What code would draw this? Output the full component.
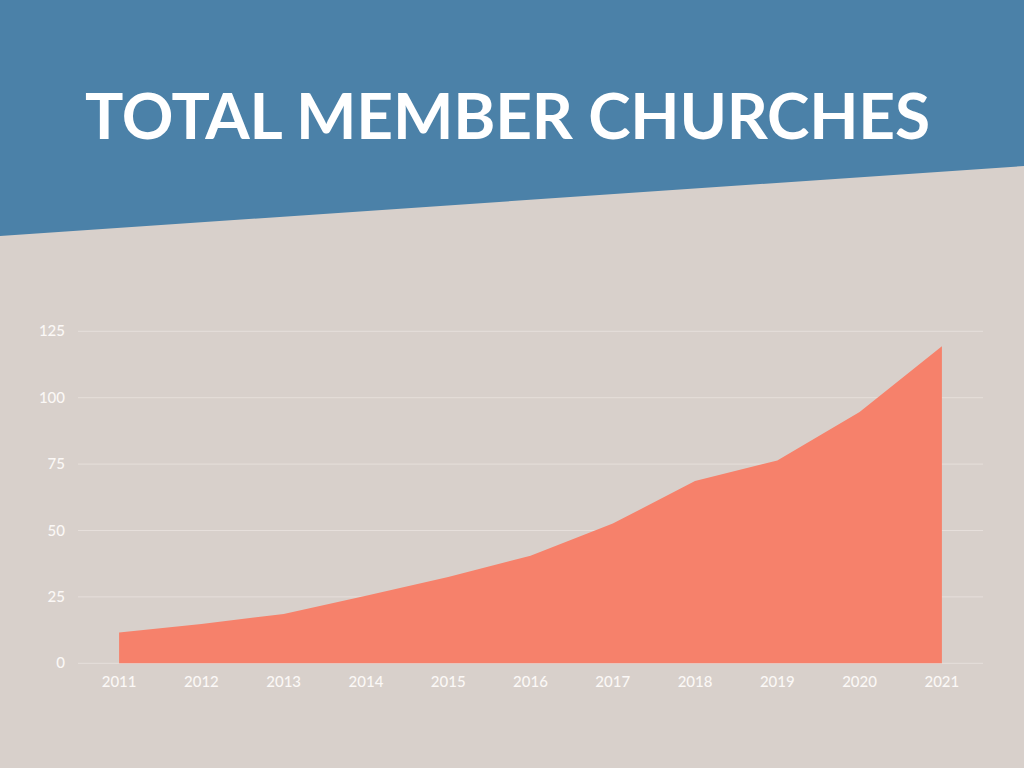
const years = ["2011", "2012", "2013", "2014", "2015", "2016", "2017", "2018", "2019", "2020", "2021"];
const values = [11.6, 14.8, 18.6, 25.4, 32.5, 40.5, 52.6, 68.6, 76.4, 94.6, 119.4];
const ticks = [0, 25, 50, 75, 100, 125];

// chart geometry in page pixels
const left = 78;
const right = 983;
const zeroY = 663.3;
const perUnit = 2.656;
const band = (right - left) / years.length;

const xAt = (i: number) => left + band / 2 + i * band;
const yAt = (v: number) => zeroY - v * perUnit;

function AreaChart() {
  const points = values.map((v, i) => `${xAt(i).toFixed(1)},${yAt(v).toFixed(1)}`);
  const area = [
    `${xAt(0).toFixed(1)},${zeroY}`,
    ...points,
    `${xAt(values.length - 1).toFixed(1)},${zeroY}`,
  ].join(" ");

  return (
    <svg
      width={1024}
      height={400}
      viewBox="0 300 1024 400"
      className="block font-['Lato','Liberation_Sans',sans-serif]"
    >
      {ticks.map((t) => (
        <line
          key={t}
          x1={left}
          x2={right}
          y1={yAt(t)}
          y2={yAt(t)}
          stroke="#e6dfdb"
          strokeWidth={1}
        />
      ))}
      <polygon points={area} fill="#f6816b" />
      {ticks.map((t) => (
        <text
          key={t}
          x={65}
          y={yAt(t) + 5}
          textAnchor="end"
          fontSize={15}
          fontWeight={500}
          fill="#fbf8f6"
        >
          {t}
        </text>
      ))}
      {years.map((y, i) => (
        <text
          key={y}
          x={xAt(i)}
          y={687}
          textAnchor="middle"
          fontSize={15}
          fontWeight={500}
          fill="#fbf8f6"
        >
          {y}
        </text>
      ))}
    </svg>
  );
}

export default function App() {
  return (
    <div className="relative h-[768px] w-[1024px] overflow-hidden bg-[#d8d0cb]">
      <header className="h-[236px] bg-[#4b81a8] [clip-path:polygon(0_0,100%_0,100%_166px,0_236px)]">
        <h1 className="pl-[85px] pt-[83px] font-['Lato','Liberation_Sans',sans-serif] text-[64px] font-bold leading-none tracking-[-0.003em] text-white">
          TOTAL MEMBER CHURCHES
        </h1>
      </header>
      <div className="mt-[64px]">
        <AreaChart />
      </div>
    </div>
  );
}
